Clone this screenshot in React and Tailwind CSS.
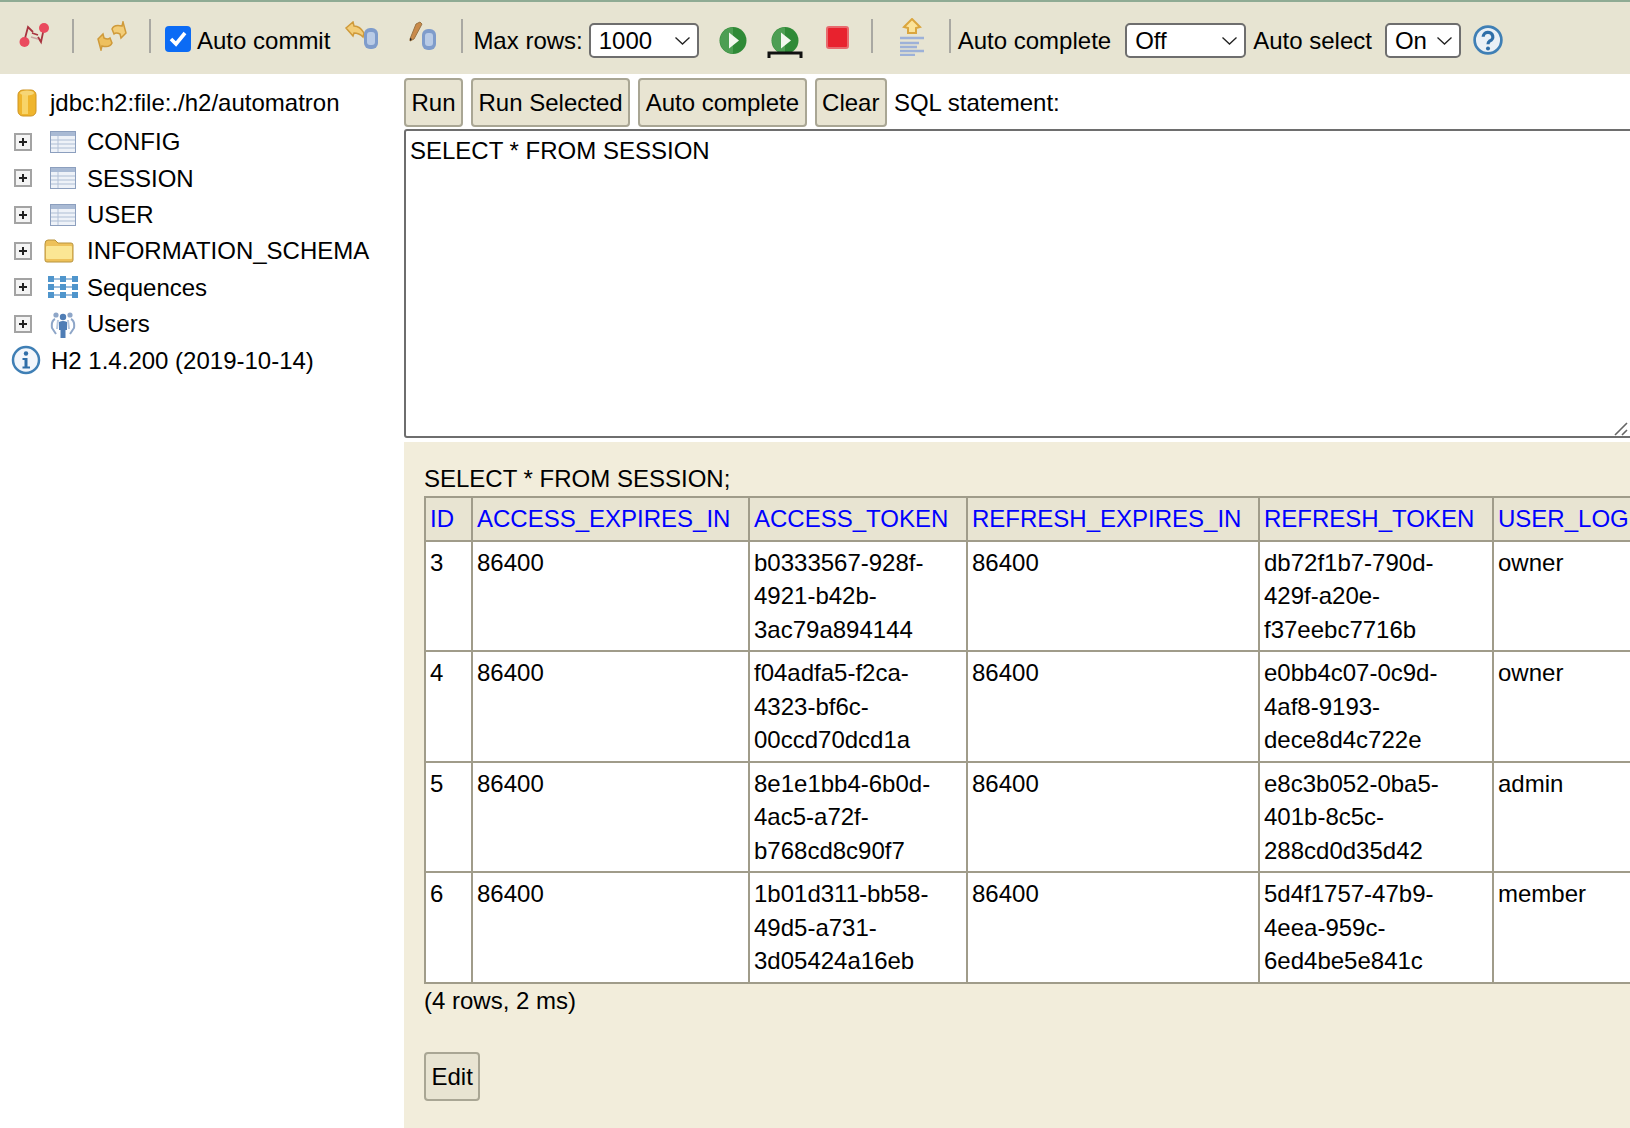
import React from "react";

const rows = [
  ["3", "86400", ["b0333567-928f-", "4921-b42b-", "3ac79a894144"], "86400", ["db72f1b7-790d-", "429f-a20e-", "f37eebc7716b"], "owner"],
  ["4", "86400", ["f04adfa5-f2ca-", "4323-bf6c-", "00ccd70dcd1a"], "86400", ["e0bb4c07-0c9d-", "4af8-9193-", "dece8d4c722e"], "owner"],
  ["5", "86400", ["8e1e1bb4-6b0d-", "4ac5-a72f-", "b768cd8c90f7"], "86400", ["e8c3b052-0ba5-", "401b-8c5c-", "288cd0d35d42"], "admin"],
  ["6", "86400", ["1b01d311-bb58-", "49d5-a731-", "3d05424a16eb"], "86400", ["5d4f1757-47b9-", "4eea-959c-", "6ed4be5e841c"], "member"],
];

const headers = [
  ["ID", "w-[47px]"],
  ["ACCESS_EXPIRES_IN", "w-[277px]"],
  ["ACCESS_TOKEN", "w-[218px]"],
  ["REFRESH_EXPIRES_IN", "w-[292px]"],
  ["REFRESH_TOKEN", "w-[234px]"],
  ["USER_LOGIN", "w-[260px]"],
];

const Sep = ({ className }) => <div className={`w-[2px] h-[34px] -mt-[9px] shrink-0 bg-[#a9a8a2] ${className}`} />;

const Cylinder = ({ x, y, w = 13, h = 22 }) => (
  <g>
    <rect x={x} y={y} width={w} height={h} rx="6" fill="#7f9ccb" />
    <rect x={x + 3} y={y + 4} width={w - 6} height={h - 8} rx="3" fill="#b9cbe6" />
  </g>
);

const Disconnect = () => (
  <svg width="31" height="26" viewBox="0 0 31 26" className="ml-[19px] shrink-0 -mt-[11px]">
    <path d="M5 20 L9 5 L14 10 M13 11 L19 13 M19 15 L22 20 L25 6" fill="none" stroke="#a8343f" strokeWidth="1.8" />
    <path d="M12 15 L19 17" stroke="#c9a2a0" strokeWidth="1.5" />
    <circle cx="5.5" cy="20" r="5" fill="#ea4a5e" />
    <circle cx="25" cy="6" r="5" fill="#ea4a5e" />
  </svg>
);

const Refresh = () => (
  <svg width="30" height="30" viewBox="0 0 30 30" className="shrink-0 -mt-[9px]">
    <path d="M1 18 L6 13 L7 17 Q11 19 13 17 L15 22 Q13 27 5 25 L4 29 Z" fill="#eec05e" stroke="#cf9a3a" strokeWidth="1.5" />
    <path d="M29 12 L24 17 L23 13 Q19 11 17 13 L15 8 Q17 3 25 5 L26 1 Z" fill="#f3cd78" stroke="#cf9a3a" strokeWidth="1.5" />
  </svg>
);

const Rollback = () => (
  <svg width="34" height="28" viewBox="0 0 34 28" className="shrink-0 -mt-[12px]">
    <path d="M1 7 L8 1 L9 5 Q15 5 19 12 L18 16 Q14 12 9 12 L8 15 Z" fill="#f3cd78" stroke="#cf9a3a" strokeWidth="1.5" />
    <Cylinder x={19} y={7} w={14} h={21} />
  </svg>
);

const Commit = () => (
  <svg width="28" height="29" viewBox="0 0 28 29" className="shrink-0 -mt-[11px]">
    <path d="M1 18 L7 3 L11 1 L13 3 L5 18 L1 20 Z" fill="#c98a4a" stroke="#9a7444" />
    <path d="M1 17 L3 18 L1 20 Z" fill="#222" />
    <Cylinder x={13} y={8} w={14} h={21} />
  </svg>
);

const Play = () => (
  <svg width="28" height="29" viewBox="0 0 28 28" className="block">
    <circle cx="14" cy="14" r="13.5" fill="#2f8a37" />
    <path d="M1 14 A13 13 0 0 1 14 1 L14 27 A13 13 0 0 1 1 14 Z" fill="#63ab66" opacity="0.6" />
    <path d="M10 6 L20 14 L10 22 Z" fill="#f2f7ee" />
  </svg>
);

const History = () => (
  <svg width="26" height="38" viewBox="0 0 26 38" className="shrink-0 -mt-[7px]">
    <path d="M13 1 L21 9 L17 10 L17 15 L9 15 L9 10 L5 9 Z" fill="#fbe39a" stroke="#dba63e" strokeWidth="2" />
    <path d="M1 20 H25 M1 25 H20 M1 29 H18 M1 33 H25 M1 37 H16" stroke="#9db1d8" strokeWidth="2.4" />
  </svg>
);

const Help = () => (
  <svg width="30" height="30" viewBox="0 0 28 28" className="ml-[12px] shrink-0 -mt-[2px]">
    <circle cx="14" cy="14" r="12.5" fill="#eaf0f6" stroke="#3f7fb5" strokeWidth="2.5" />
    <path d="M9.5 11 A4.5 4.2 0 1 1 15.5 15 Q14 16 14 18" fill="none" stroke="#2f6ea8" strokeWidth="3" />
    <circle cx="14" cy="22" r="1.9" fill="#2f6ea8" />
  </svg>
);

const Select = ({ value, className }) => (
  <div className={`relative h-[35px] shrink-0 bg-white border-2 border-[#6e6e6e] rounded-[5px] ${className}`}>
    <div className="pl-[8px] leading-[31px]">{value}</div>
    <svg width="17" height="10" viewBox="0 0 17 10" className="absolute right-[6px] top-[11px]">
      <path d="M1.5 1.5 L8.5 8 L15.5 1.5" fill="none" stroke="#222" strokeWidth="1.3" />
    </svg>
  </div>
);

const PlusBox = () => (
  <svg width="18" height="18" viewBox="0 0 18 18" className="shrink-0">
    <rect x="1" y="1" width="16" height="16" fill="#f4f4f4" stroke="#a3a3a3" strokeWidth="2" />
    <path d="M5 9 H13 M9 5 V13" stroke="#222" strokeWidth="2" />
  </svg>
);

const TableIcon = () => (
  <svg width="26" height="22" viewBox="0 0 26 22">
    <rect x="0.5" y="0.5" width="25" height="21" fill="#eef2f8" stroke="#8c9fbe" />
    <rect x="1" y="1" width="24" height="4" fill="#a9bad4" />
    <path d="M1 9 H25 M1 13 H25 M1 17 H25" stroke="#c3cfe0" strokeWidth="1.5" />
    <path d="M8 5 V21" stroke="#b4c2d8" />
  </svg>
);

const FolderIcon = () => (
  <svg width="30" height="24" viewBox="0 0 30 24">
    <path d="M1 5 Q1 1 4 1 L11 1 L14 4 L27 4 Q29 4 29 6 L29 21 Q29 23 27 23 L3 23 Q1 23 1 21 Z" fill="#eec15a" stroke="#b8943e" />
    <rect x="2" y="7" width="26" height="13" rx="1" fill="#fbe694" />
  </svg>
);

const SequenceIcon = () => (
  <svg width="30" height="22" viewBox="0 0 30 22">
    <path d="M3 3 H27 M3 11 H27 M3 19 H27" stroke="#9dbedd" strokeWidth="2" />
    {[3, 11, 19].map((y) =>
      [3, 15, 27].map((x) => <rect key={`${x}-${y}`} x={x - 3} y={y - 3} width="6" height="6" fill="#4f95cc" />)
    )}
  </svg>
);

const UsersIcon = () => (
  <svg width="26" height="28" viewBox="0 0 26 28">
    <circle cx="6" cy="5" r="2.6" fill="#8ea6c8" />
    <circle cx="20" cy="5" r="2.6" fill="#8ea6c8" />
    <path d="M5 9 Q1 11 2 18 L6 24 M21 9 Q25 11 24 18 L20 24" fill="none" stroke="#8ea6c8" strokeWidth="2" />
    <path d="M8 10 L7 19 M18 10 L19 19" stroke="#b8c8de" strokeWidth="2" />
    <circle cx="13" cy="7" r="3.2" fill="#4f7db5" />
    <path d="M9 12 Q13 10 17 12 V20 H15.5 V28 H10.5 V20 H9 Z" fill="#4f7db5" />
  </svg>
);

const DbIcon = () => (
  <svg width="20" height="28" viewBox="0 0 20 28">
    <rect x="1" y="1" width="18" height="26" rx="5" fill="#efb52d" stroke="#cf9420" />
    <rect x="5" y="5" width="6" height="20" fill="#f8d468" />
    <ellipse cx="10" cy="4" rx="7" ry="2.5" fill="#f6d676" />
  </svg>
);

const InfoIcon = () => (
  <svg width="30" height="30" viewBox="0 0 30 30" className="shrink-0">
    <circle cx="15" cy="15" r="13" fill="#f2f6fb" stroke="#3f7fb5" strokeWidth="2.5" />
    <circle cx="15" cy="8.5" r="2.2" fill="#2f6ea8" />
    <path d="M11.5 13 H16.5 V21.5 H19 V23.5 H11.5 V21.5 H13.5 V15 H11.5 Z" fill="#2f6ea8" />
  </svg>
);

const treeItems = [
  ["CONFIG", <TableIcon key="a" />, "pl-[18px]"],
  ["SESSION", <TableIcon key="b" />, "pl-[18px]"],
  ["USER", <TableIcon key="c" />, "pl-[18px]"],
  ["INFORMATION_SCHEMA", <FolderIcon key="d" />, "pl-[12px]"],
  ["Sequences", <SequenceIcon key="e" />, "pl-[16px]"],
  ["Users", <UsersIcon key="f" />, "pl-[18px]"],
];

const Button = ({ children, className = "" }) => (
  <button className={`h-[49px] px-[5.5px] shrink-0 bg-[#e8e4d2] border-2 border-[#a9a694] rounded-[4px] ${className}`}>
    {children}
  </button>
);

const Cell = ({ value }) => (
  <td className="border-2 border-[#a09c8a] bg-white p-[4px] align-top">
    {Array.isArray(value) ? value.map((line) => <div key={line}>{line}</div>) : value}
  </td>
);

export default function App() {
  return (
    <div className="w-[1630px] h-[1128px] overflow-hidden flex flex-col bg-white text-black text-[24px] leading-[33.5px] font-['Liberation_Sans',Arial,sans-serif]">
      <div className="h-[74px] shrink-0 flex items-center whitespace-nowrap bg-[#e7e4d2] border-t-2 border-[#8fab94] pt-[5px]">
        <Disconnect />
        <Sep className="ml-[22px] mr-[23px]" />
        <Refresh />
        <Sep className="ml-[22px] mr-[14px]" />
        <div className="w-[26px] h-[26px] -mt-[3px] shrink-0 rounded-[4px] bg-[#0b6bf5] flex items-center justify-center">
          <svg width="20" height="18" viewBox="0 0 20 18">
            <path d="M3 9 L8 14 L17 3" fill="none" stroke="#fff" strokeWidth="3.6" />
          </svg>
        </div>
        <span className="ml-[6px] mr-[15px]">Auto commit</span>
        <Rollback />
        <div className="w-[30px] shrink-0" />
        <Commit />
        <Sep className="ml-[24px] mr-[10px]" />
        <span className="mr-[6px]">Max rows:</span>
        <Select value="1000" className="w-[110px]" />
        <div className="ml-[20px] shrink-0">
          <Play />
        </div>
        <div className="relative ml-[20px] w-[36px] h-[33px] mt-[3px] shrink-0 flex justify-center">
          <Play />
          <svg width="36" height="8" viewBox="0 0 36 8" className="absolute left-0 bottom-0">
            <path d="M2 7 V2 H34 V7" fill="none" stroke="#111" strokeWidth="3" />
          </svg>
        </div>
        <div className="ml-[23px] mr-[22px] w-[23px] h-[23px] shrink-0 -mt-[6px] rounded-[3px] bg-[#e8222e] border-2 border-[#e86a6e]" />
        <Sep className="mr-[26px]" />
        <History />
        <Sep className="ml-[24px] mr-[7px]" />
        <span className="mr-[14px]">Auto complete</span>
        <Select value="Off" className="w-[121px]" />
        <span className="ml-[7px] mr-[13px]">Auto select</span>
        <Select value="On" className="w-[76px]" />
        <Help />
      </div>

      <div className="flex flex-1 min-h-0">
        <div className="w-[404px] shrink-0 pt-[8px]">
          <div className="h-[42px] flex items-center">
            <div className="w-[50px] pl-[17px] shrink-0">
              <DbIcon />
            </div>
            <span>jdbc:h2:file:./h2/automatron</span>
          </div>
          {treeItems.map(([label, icon, pad]) => (
            <div key={label} className="h-[36.3px] flex items-center pl-[14px]">
              <PlusBox />
              <div className={`w-[55px] shrink-0 flex ${pad}`}>{icon}</div>
              <span>{label}</span>
            </div>
          ))}
          <div className="h-[37px] flex items-center pl-[11px]">
            <InfoIcon />
            <span className="ml-[10px]">H2 1.4.200 (2019-10-14)</span>
          </div>
        </div>

        <div className="flex-1 min-w-0 flex flex-col">
          <div className="flex items-center h-[53px] pt-[4px] gap-[8px] whitespace-nowrap">
            <Button>Run</Button>
            <Button>Run Selected</Button>
            <Button>Auto complete</Button>
            <Button>Clear</Button>
            <span className="-ml-[1px]">SQL statement:</span>
          </div>
          <div className="relative h-[309px] mt-[2px] -mr-[4px] shrink-0 border-2 border-[#6e6e6e] rounded-tl-[3px] rounded-bl-[3px] pl-[4px] pt-[3px]">
            SELECT * FROM SESSION
            <svg width="14" height="14" viewBox="0 0 14 14" className="absolute right-[4px] bottom-0">
              <path d="M1 13 L13 1 M8 13 L13 8" stroke="#666" strokeWidth="1.6" />
            </svg>
          </div>
          <div className="flex-1 mt-[4px] min-h-0 bg-[#f2eddb] pl-[20px] pt-[20px] overflow-hidden">
            <div className="h-[34px]">SELECT * FROM SESSION;</div>
            <table className="table-fixed border-collapse w-[1328px]">
              <thead>
                <tr>
                  {headers.map(([label, width]) => (
                    <th
                      key={label}
                      className={`${width} border-2 border-[#a09c8a] bg-[#e8e4d2] p-[4px] font-normal text-left text-[#0000ff] whitespace-nowrap overflow-hidden`}
                    >
                      {label}
                    </th>
                  ))}
                </tr>
              </thead>
              <tbody>
                {rows.map((row) => (
                  <tr key={row[0]}>
                    {row.map((value, i) => (
                      <Cell key={i} value={value} />
                    ))}
                  </tr>
                ))}
              </tbody>
            </table>
            <div>(4 rows, 2 ms)</div>
            <Button className="mt-[35px]">Edit</Button>
          </div>
        </div>
      </div>
    </div>
  );
}
